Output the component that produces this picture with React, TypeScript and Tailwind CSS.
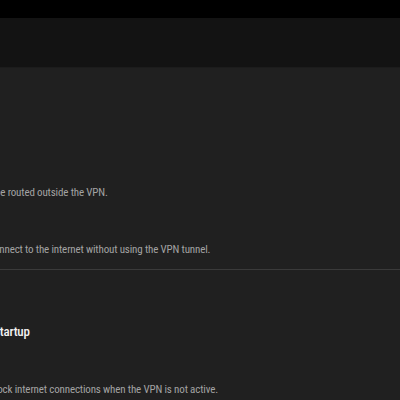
const App = () => {
  return (
    <div className="w-[400px] h-[400px] overflow-hidden bg-[#202020] font-['Roboto_Condensed','Roboto',sans-serif]">
      <div className="h-[18px] bg-black" />
      <header className="h-[50px] bg-[#131313] border-b border-[#1c1c1c]" />

      <main className="pt-[118px]">
        <p className="-ml-[5px] text-[11px] leading-[14px] tracking-[-0.15px] text-[#a3a3a3] whitespace-nowrap">
          be routed outside the VPN.
        </p>
        <p className="-ml-[11px] mt-[43px] text-[11px] leading-[14px] tracking-[-0.15px] text-[#a3a3a3] whitespace-nowrap">
          connect to the internet without using the VPN tunnel.
        </p>

        <div className="mt-[12px] border-t border-[#3a3a3a]" />

        <h3 className="-ml-[7px] mt-[53px] text-[13px] leading-[18px] tracking-[-0.2px] font-medium text-[#f2f2f2] whitespace-nowrap">
          Startup
        </h3>
        <p className="-ml-[11px] mt-[42px] text-[11px] leading-[14px] tracking-[-0.15px] text-[#a3a3a3] whitespace-nowrap">
          Block internet connections when the VPN is not active.
        </p>
      </main>
    </div>
  )
}

export default App
